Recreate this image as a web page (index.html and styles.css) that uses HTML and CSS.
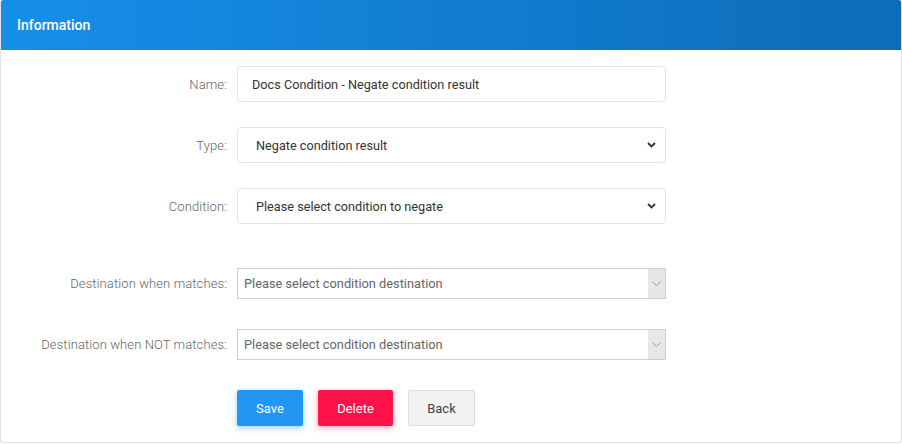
FILE: index.html
```html
<!DOCTYPE html>
<html lang="en">
<head>
  <meta charset="UTF-8">
  <title>Information</title>
  <link rel="stylesheet" href="styles.css">
</head>
<body>
  <div class="card">
    <div class="card-header">Information</div>

    <div class="card-body">
      <div class="row">
        <label class="label">Name:</label>
        <div class="field">Docs Condition - Negate condition result</div>
      </div>

      <div class="row">
        <label class="label">Type:</label>
        <div class="field select">
          <span>Negate condition result</span>
          <svg class="chev" width="9" height="6" viewBox="0 0 9 6"><path d="M1 1l3.5 3.5L8 1" fill="none" stroke="#333" stroke-width="1.8"/></svg>
        </div>
      </div>

      <div class="row">
        <label class="label">Condition:</label>
        <div class="field select">
          <span>Please select condition to negate</span>
          <svg class="chev" width="9" height="6" viewBox="0 0 9 6"><path d="M1 1l3.5 3.5L8 1" fill="none" stroke="#333" stroke-width="1.8"/></svg>
        </div>
      </div>

      <div class="row dest first">
        <label class="label">Destination when matches:</label>
        <div class="combo">
          <span class="combo-text">Please select condition destination</span>
          <span class="combo-arrow"><svg width="9" height="6" viewBox="0 0 9 6"><path d="M0.5 0.5l4 4 4-4" fill="none" stroke="#999" stroke-width="1"/></svg></span>
        </div>
      </div>

      <div class="row dest">
        <label class="label">Destination when NOT matches:</label>
        <div class="combo">
          <span class="combo-text">Please select condition destination</span>
          <span class="combo-arrow"><svg width="9" height="6" viewBox="0 0 9 6"><path d="M0.5 0.5l4 4 4-4" fill="none" stroke="#999" stroke-width="1"/></svg></span>
        </div>
      </div>

      <div class="row actions">
        <span class="label"></span>
        <button class="btn btn-save">Save</button>
        <button class="btn btn-delete">Delete</button>
        <button class="btn btn-back">Back</button>
      </div>
    </div>
  </div>
</body>
</html>
```

FILE: styles.css
```css
body {
  margin: 0;
  font-family: Roboto, "Liberation Sans", sans-serif;
  background-color: #fff;
}
.card {
  width: 902px;
  height: 443px;
  box-sizing: border-box;
  border: 1px solid #e2e2e2;
  border-top: none;
  border-radius: 3px;
  overflow: hidden;
}
.card-header {
  height: 50px;
  margin: 0 -1px;
  padding-left: 17px;
  display: flex;
  align-items: center;
  background: linear-gradient(to right, #168fea, #0d6cb8);
  color: #fff;
  font-size: 14px;
  font-weight: 500;
  border-radius: 3px 3px 0 0;
}
.card-body {
  padding-top: 16px;
}
.row {
  display: flex;
  align-items: center;
  margin-bottom: 25px;
}
.row.first {
  margin-top: 44px;
}
.row.dest {
  margin-bottom: 30px;
}
.label {
  width: 226px;
  margin-right: 10px;
  text-align: right;
  font-size: 13px;
  font-weight: 300;
  letter-spacing: 0.1px;
  color: #666;
}
.field {
  width: 429px;
  height: 36px;
  box-sizing: border-box;
  border: 1px solid #e3e3e3;
  border-radius: 4px;
  padding: 0 14px;
  display: flex;
  align-items: center;
  font-size: 12.7px;
  color: #333;
}
.select {
  padding-left: 18px;
  padding-right: 9px;
  justify-content: space-between;
}
.combo {
  width: 429px;
  height: 31px;
  box-sizing: border-box;
  border: 1px solid #cfcfcf;
  display: flex;
  align-items: stretch;
  font-size: 12.8px;
  color: #666;
}
.combo-text {
  flex: 1;
  padding-left: 6px;
  display: flex;
  align-items: center;
}
.combo-arrow {
  width: 17px;
  background-color: #e7e7e7;
  display: flex;
  align-items: center;
  justify-content: center;
}
.actions {
  margin-bottom: 0;
}
.btn {
  height: 36px;
  border: none;
  border-radius: 2px;
  font-family: Roboto, "Liberation Sans", sans-serif;
  font-size: 13px;
  cursor: pointer;
  margin-right: 15px;
}
.btn-save {
  width: 66px;
  background-color: #2196f3;
  color: #fff;
  box-shadow: 0 2px 6px rgba(33,150,243,0.45);
}
.btn-delete {
  width: 75px;
  background-color: #ff1249;
  color: #fff;
  box-shadow: 0 2px 6px rgba(255,18,73,0.4);
}
.btn-back {
  width: 67px;
  background-color: #f2f2f2;
  border: 1px solid #dcdcdc;
  color: #444;
}
```
